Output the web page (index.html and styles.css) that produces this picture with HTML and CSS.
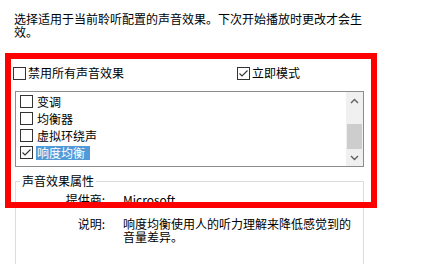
FILE: index.html
```html
<!DOCTYPE html>
<html>
  <head>
    <title>声音效果</title>
    <link rel="stylesheet" href="styles.css">
  </head>

  <body>
    <div class="page">
      <p class="intro">选择适用于当前聆听配置的声音效果。下次开始播放时更改才会生效。</p>

      <div class="opt-row">
        <label class="chk"><span class="box"></span>禁用所有声音效果</label>
        <label class="chk chk-right">
          <span class="box">
            <svg width="13" height="13" viewBox="0 0 13 13"><polyline points="2.5,6.5 5,9 10.5,3.5" fill="none" stroke="#333" stroke-width="1.1"/></svg>
          </span>立即模式
        </label>
      </div>

      <div class="listbox">
        <ul class="items">
          <li><span class="box"></span><span class="name">变调</span></li>
          <li><span class="box"></span><span class="name">均衡器</span></li>
          <li><span class="box"></span><span class="name">虚拟环绕声</span></li>
          <li class="sel">
            <span class="box">
              <svg width="13" height="13" viewBox="0 0 13 13"><polyline points="2.5,6.5 5,9 10.5,3.5" fill="none" stroke="#333" stroke-width="1.1"/></svg>
            </span><span class="name">响度均衡</span>
          </li>
        </ul>
        <div class="scroll">
          <div class="arrow">
            <svg width="9" height="6" viewBox="0 0 9 6"><polyline points="1,5 4.5,1.5 8,5" fill="none" stroke="#606060" stroke-width="1.4"/></svg>
          </div>
          <div class="track"><div class="thumb"></div></div>
          <div class="arrow">
            <svg width="9" height="6" viewBox="0 0 9 6"><polyline points="1,1 4.5,4.5 8,1" fill="none" stroke="#606060" stroke-width="1.4"/></svg>
          </div>
        </div>
      </div>

      <fieldset class="props">
        <legend>声音效果属性</legend>
        <div class="prop-grid">
          <span class="k">提供商:</span>
          <span class="v">Microsoft</span>
          <span class="k">说明:</span>
          <span class="v">响度均衡使用人的听力理解来降低感觉到的音量差异。</span>
        </div>
      </fieldset>

      <!-- red highlight drawn over the screenshot -->
      <div class="mark"></div>
    </div>
  </body>
</html>
```

FILE: styles.css
```css
html,
body {
  margin: 0;
  padding: 0;
  background: #fff;
}
body {
  width: 421px;
  height: 264px;
  overflow: hidden;
  font-family: "Noto Sans CJK SC", "Noto Sans", sans-serif;
  font-size: 12px;
  color: #000;
}
.page {
  position: relative;
  height: 264px;
  overflow: hidden;
}

.intro {
  margin: 0;
  padding: 12px 0 0 14px;
  width: 352px;
  line-height: 13px;
}

.opt-row {
  display: flex;
  margin-top: 28px;
  padding-left: 13px;
  padding-right: 121px;
  height: 14px;
  line-height: 14px;
}
.chk {
  display: flex;
  align-items: center;
  gap: 2px;
}
.chk-right {
  margin-left: auto;
}

.box {
  display: inline-block;
  box-sizing: border-box;
  width: 13px;
  height: 13px;
  border: 1px solid #333;
  background: #fff;
  position: relative;
  flex: none;
}
.box svg {
  position: absolute;
  left: -1px;
  top: -1px;
}

.listbox {
  display: flex;
  box-sizing: border-box;
  margin: 11px 0 0 15px;
  width: 349px;
  height: 76px;
  border: 1px solid #8c8c8c;
}
.items {
  flex: 1;
  list-style: none;
  margin: 0;
  padding: 1px 0 0 4px;
}
.items li {
  display: flex;
  align-items: center;
  height: 17px;
  line-height: 14px;
}
.items .name {
  margin-left: 3px;
  padding: 0 5px 0 1px;
}
.items .sel .name {
  background: #519ad8;
  color: #fff;
}

.scroll {
  display: flex;
  flex-direction: column;
  width: 17px;
  background: #f0f0f0;
}
.arrow {
  display: flex;
  align-items: center;
  justify-content: center;
  height: 17px;
}
.track {
  flex: 1;
  display: flex;
  flex-direction: column;
  justify-content: flex-end;
}
.thumb {
  height: 25px;
  margin: 0 1px;
  background: #cdcdcd;
}

.props {
  box-sizing: border-box;
  margin: 7px 0 0 15px;
  width: 349px;
  height: 100px;
  padding: 0 0 0 4px;
  border: 1px solid #dcdcdc;
}
.props legend {
  padding: 0 2px;
  line-height: 14px;
}
.prop-grid {
  display: grid;
  grid-template-columns: 85px 235px;
  column-gap: 18px;
  row-gap: 11px;
  margin-top: 5px;
  line-height: 13px;
}
.k {
  text-align: right;
}

.mark {
  position: absolute;
  left: 5px;
  top: 53px;
  box-sizing: border-box;
  width: 372px;
  height: 155px;
  border: 6px solid #f00;
}
```
